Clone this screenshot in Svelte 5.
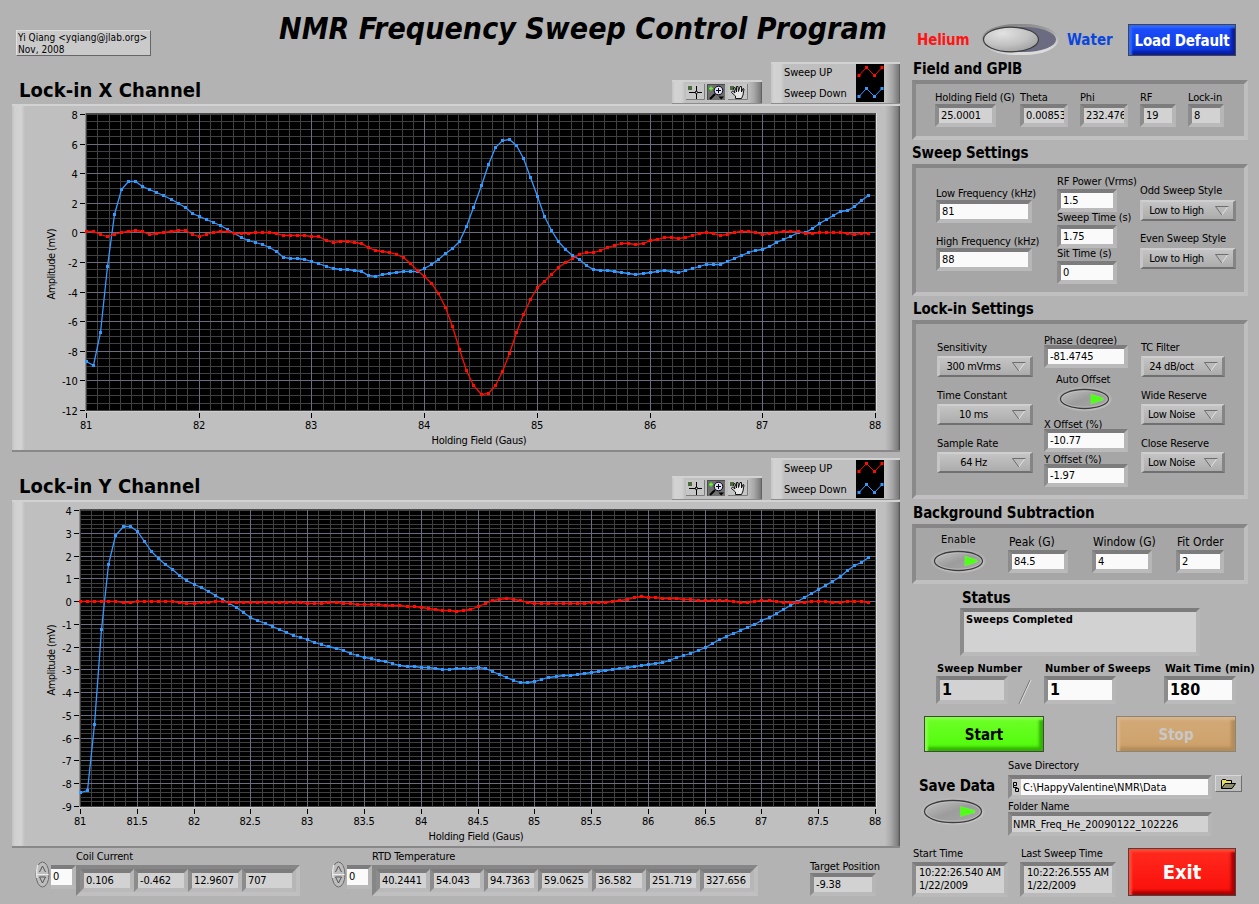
<script>
  // sample heights in plot pixels, measured down from the top of the scale
  const xUp = [
    117,117,120,122,120,118,117,116,117,120,119,118,117,116,116,120,122,120,118,117,117,119,119,119,
    118,118,118,119,121,121,121,121,122,122,126,128,127,127,128,129,133,136,137,138,140,143,149,156,
    162,169,179,193,212,235,256,271,280,279,271,257,239,218,200,185,173,167,160,153,148,144,140,138,
    138,136,133,131,129,129,130,129,126,125,123,123,124,123,121,119,118,119,121,120,118,117,117,118,
    120,119,118,117,117,117,119,119,118,118,118,118,119,120,119,119
  ];
  const xDown = [
    247,251,218,152,100,75,67,67,72,75,78,81,85,89,93,99,102,105,108,111,115,119,123,126,
    128,130,133,137,143,144,144,145,147,149,152,154,155,155,156,157,161,162,160,159,158,157,157,157,
    154,150,145,139,134,127,112,93,71,50,33,26,25,31,44,63,82,102,116,127,135,141,145,151,
    155,156,156,157,158,159,160,159,158,157,156,157,158,156,154,152,150,150,150,147,144,141,138,136,
    135,132,128,125,122,118,118,114,109,105,101,97,96,92,86,81
  ];
  const yUp = [
    91,91,91,91,91,91,92,92,91,91,91,91,91,91,92,93,93,92,92,91,91,92,92,92,
    92,92,92,92,92,92,92,92,93,93,93,92,92,93,93,94,94,94,94,95,95,95,96,96,
    97,98,99,100,100,101,100,99,96,93,90,89,88,89,90,92,93,93,93,93,93,93,93,93,
    92,92,92,91,90,89,87,86,87,87,88,88,88,89,89,90,90,90,90,90,91,92,92,91,
    90,90,91,92,92,92,92,91,91,91,92,92,91,91,91,92
  ];
  const yDown = [
    282,280,214,119,54,25,16,16,21,31,41,48,54,59,65,70,74,77,81,85,89,93,97,102,
    107,110,113,116,119,122,125,127,129,132,134,136,138,140,143,145,147,148,150,151,153,155,156,156,
    157,157,158,159,159,158,158,158,157,158,161,164,167,170,172,172,171,169,167,166,165,165,164,163,
    162,161,160,159,158,157,156,155,154,153,152,150,147,145,143,140,137,133,129,126,123,120,117,114,
    110,107,103,99,95,91,87,83,79,75,71,66,60,55,52,47
  ];

  const PLOT_H = 296;
  const RIGHT = 863.5;
  const TOP = 10.5;

  function makeChart(title, left, max, min, yStep, yMinor, xStep, up, down) {
    const width = RIGHT - left;
    const px = (v) => Math.floor(left + ((v - 81) / 7) * width) + 0.5;
    const py = (v) => Math.floor(TOP + ((max - v) / (max - min)) * PLOT_H) + 0.5;
    const xs = [];
    const ys = [];
    const xMinors = [];
    const yMinors = [];
    for (let v = 81; v <= 88; v += xStep) xs.push({ v, p: px(v) });
    for (let v = max; v >= min; v -= yStep) ys.push({ v, p: py(v) });
    for (let i = 0; i <= 70; i++) xMinors.push(px(81 + i / 10));
    for (let i = 0; i <= (max - min) / yMinor; i++) yMinors.push(py(max - i * yMinor));
    const trace = (data, color) => ({
      color,
      points: data.map((d, i) => [Math.round(left - 0.5 + (i / 112) * width), TOP - 0.5 + d])
    });
    return {
      title, left, width, xs, ys, xMinors, yMinors,
      traces: [trace(down, "#3399ff"), trace(up, "#ff0d00")]
    };
  }

  const charts = [
    makeChart("Lock-in X Channel", 74.5, 8, -12, 2, 0.5, 1, xUp, xDown),
    makeChart("Lock-in Y Channel", 68.5, 4, -9, 1, 0.2, 0.5, yUp, yDown)
  ];

  const arrays = [
    { label: "Coil Current", values: ["0.106", "-0.462", "12.9607", "707"] },
    {
      label: "RTD Temperature",
      values: ["40.2441", "54.043", "94.7363", "59.0625", "36.582", "251.719", "327.656"]
    }
  ];

  let saveData = true;
  let autoOffset = true;
  let bgEnable = true;
</script>

{#snippet field(label, value, width, kind)}
  <div class="field">
    <span class="label">{label}</span>
    <div class="box {kind}" style:width="{width}px">{value}</div>
  </div>
{/snippet}

{#snippet ring(label, value, width)}
  <div class="field ring-field">
    <span class="label">{label}</span>
    <div class="ring" style:width="{width}px">
      <span>{value}</span>
      <svg width="14" height="10" viewBox="0 0 14 10">
        <path d="M0.5 0.5H13L6.8 9Z" fill="#bababa" />
        <path d="M13 0.5L6.8 9" stroke="#e2e2e2" fill="none" />
        <path d="M13.5 0.5H0.5L6.8 9" stroke="#6e6e6e" fill="none" />
      </svg>
    </div>
  </div>
{/snippet}

{#snippet oval(w, h, on)}
  <svg class="oval" width={w + 8} height={h + 8} viewBox="0 0 {w + 8} {h + 8}">
    <defs>
      <linearGradient id="ovalFill" x1="0" y1="0" x2="1" y2="1">
        <stop offset="0" stop-color="#c4c4c4" />
        <stop offset=".5" stop-color="#9c9c9c" />
        <stop offset="1" stop-color="#a8a8a8" />
      </linearGradient>
    </defs>
    <ellipse cx={w / 2 + 4} cy={h / 2 + 4} rx={w / 2 + 3} ry={h / 2 + 2.5} fill="#c0c0c0" opacity=".35" />
    <ellipse cx={w / 2 + 5} cy={h / 2 + 5} rx={w / 2 + 0.5} ry={h / 2 + 0.5} fill="#d0d0d0" opacity=".5" />
    <ellipse cx={w / 2 + 4} cy={h / 2 + 4} rx={w / 2 - 0.5} ry={h / 2 - 0.5} fill="url(#ovalFill)" stroke="#3c3c3c" stroke-width="1.3" />
    <ellipse cx={w / 2 + 4} cy={h / 2 + 4} rx={w / 2 - 1.8} ry={h / 2 - 1.8} fill="none" stroke="#cfcfcf" stroke-width=".8" opacity=".7" />
    {#if on}
      <path d="M{w * 0.63 + 4} {h / 2 - 1}L{w * 0.88 + 4} {h / 2 + 3}V{h / 2 + 5}L{w * 0.63 + 4} {h / 2 + 9}Z" fill="#4dff14" stroke="#7cf050" stroke-width=".5" />
    {/if}
  </svg>
{/snippet}

<div class="panel">
  <div class="left">
    <header>
      <div class="author">Yi Qiang &lt;yqiang@jlab.org&gt;<br />Nov, 2008</div>
      <h1>NMR Frequency Sweep Control Program</h1>
    </header>

    {#each charts as chart}
      <section class="channel">
        <div class="channel-head">
          <h2>{chart.title}</h2>
          <div class="palette raised">
            <svg width="62" height="16" viewBox="0 0 62 16">
              <!-- cursor tool -->
              <rect width="19" height="16" fill="#c6c6c6" />
              <path d="M18.5 0V15.5H0" stroke="#7c7c7c" fill="none" />
              <rect x="2" y="2" width="4" height="4" fill="#4d6a3c" />
              <path d="M3 8.5H16M10.5 2V15" stroke="#000" fill="none" />
              <rect x="9.5" y="7.5" width="2" height="2" fill="#ccc" stroke="#000" stroke-width=".6" />
              <!-- zoom tool -->
              <rect x="21" width="18" height="16" fill="#6f6f6f" />
              <path d="M21.5 16V.5H39" stroke="#4c4c4c" fill="none" />
              <path d="M23 4.5H27M25 2.5V6.5" stroke="#55ff22" stroke-width="1.4" />
              <path d="M29 10L24 15" stroke="#000" stroke-width="2" />
              <circle cx="32.5" cy="6.5" r="4.3" fill="#e0e0ff" stroke="#000" />
              <path d="M30 6.5H35M32.5 4V9" stroke="#000" />
              <path d="M32.5 12.5H38L35.2 15.5Z" fill="#000" />
              <!-- pan tool -->
              <rect x="42" width="20" height="16" fill="#c6c6c6" />
              <path d="M61.5 0V15.5H42" stroke="#7c7c7c" fill="none" />
              <rect x="44" y="2" width="4" height="4" fill="#4d6a3c" />
              <path d="M49.5 14.5V12L45.5 8.5L46.5 7L49 9L47.5 4L49 3.5L50.5 8V2.5H52L52.5 7.5L54 2.5H55.5V8L57 4.5L58 5L57 11L55.5 14.5Z" fill="#e8e8e8" stroke="#000" stroke-width=".9" />
            </svg>
          </div>
          <div class="legend raised">
            <div class="names"><span>Sweep UP</span><span>Sweep Down</span></div>
            <svg width="28" height="38" viewBox="0 0 28 38">
              <rect width="28" height="38" fill="#000" />
              {#each [["#ff0d00", 0], ["#3399ff", 21]] as [color, dy]}
                <g transform="translate(0 {dy})" fill={color}>
                  <path d="M3 11.5L10.5 3.5L18.5 11.5L26 3.5" stroke={color} fill="none" />
                  <path d="M1.5 10h3v3h-3zM9 2h3v3H9zM17 10h3v3h-3zM24.5 2h3v3h-3z" />
                </g>
              {/each}
            </svg>
          </div>
        </div>

        <div class="graph">
          <svg width="888" height="348" viewBox="0 0 888 348">
            <rect x={chart.left - 1} y="9" width={chart.width + 2.5} height="298.5" fill="#dedede" />
            <rect x={chart.left - 1} y="9" width={chart.width + 1.5} height="297.5" fill="#4c4c4c" />
            <rect x={chart.left - 0.5} y="10" width={chart.width + 1} height="297" fill="#000" />
            <g stroke="#404040" shape-rendering="crispEdges">
              {#each chart.xMinors as p}<line x1={p} x2={p} y1="10" y2="307" />{/each}
              {#each chart.yMinors as p}<line x1={chart.left} x2={RIGHT} y1={p} y2={p} />{/each}
            </g>
            <g stroke="#6b6b80" shape-rendering="crispEdges">
              {#each chart.xs.slice(1, -1) as t}<line x1={t.p} x2={t.p} y1="10" y2="307" />{/each}
              {#each chart.ys.slice(1, -1) as t}<line x1={chart.left} x2={RIGHT} y1={t.p} y2={t.p} />{/each}
            </g>
            <g stroke="#000" shape-rendering="crispEdges">
              {#each chart.xs as t}<line x1={t.p} x2={t.p} y1="309" y2="314" />{/each}
              {#each chart.ys as t}<line x1={chart.left - 7} x2={chart.left - 2} y1={t.p} y2={t.p} />{/each}
            </g>
            {#each chart.ys as t}
              <text x={chart.left - 9} y={t.p + 4} text-anchor="end">{t.v}</text>
            {/each}
            {#each chart.xs as t}
              <text x={t.p - 0.5} y="325" text-anchor="middle">{t.v}</text>
            {/each}
            <text x={(chart.left + RIGHT) / 2 - 2} y="340" text-anchor="middle" textLength="95">Holding Field (Gaus)</text>
            <text transform="translate(43 160) rotate(-90)" text-anchor="middle" textLength="71">Amplitude (mV)</text>
            {#each chart.traces as tr}
              <polyline points={tr.points.map((p) => `${p[0] + 0.5},${p[1] + 0.5}`).join(" ")} fill="none" stroke={tr.color} stroke-width="1.3" />
              {#each tr.points as [x, y]}
                <rect x={x - 1} y={y - 1} width="3" height="3" fill={tr.color} />
              {/each}
            {/each}
          </svg>
        </div>
      </section>
    {/each}

    <footer>
      {#each arrays as arr}
        <div class="array">
          <svg width="16" height="27" viewBox="0 0 16 27">
            <ellipse cx="7.5" cy="13.5" rx="6.5" ry="12.5" fill="#bdbdbd" stroke="#6c6c6c" />
            <path d="M3 4Q1 9 2 17" stroke="#e6e6e6" fill="none" stroke-width="1.5" />
            <path d="M1.5 13.5H13.5" stroke="#eee" />
            <path d="M4.5 11L7.5 5L10.5 11M4.5 16H10.5L7.5 22Z" stroke="#555" fill="none" />
          </svg>
          <div class="box index">0</div>
          <div class="field">
            <span class="label">{arr.label}</span>
            <div class="cluster">
              {#each arr.values as v}<div class="box ro cell">{v}</div>{/each}
            </div>
          </div>
        </div>
      {/each}
      <div class="target">{@render field("Target Position", "-9.38", 66, "ro")}</div>
    </footer>
  </div>

  <div class="right">
    <div class="mode">
      <span class="helium">Helium</span>
      <svg width="78" height="34" viewBox="0 0 78 34">
        <defs>
          <radialGradient id="knob" cx=".35" cy=".25" r=".8">
            <stop offset="0" stop-color="#e2e2e2" />
            <stop offset=".6" stop-color="#c2c2c2" />
            <stop offset="1" stop-color="#a0a0a0" />
          </radialGradient>
          <linearGradient id="rim" x1="0" y1="0" x2=".3" y2="1">
            <stop offset="0" stop-color="#7c7c7c" />
            <stop offset=".5" stop-color="#a8a8a8" />
            <stop offset="1" stop-color="#dcdcdc" />
          </linearGradient>
        </defs>
        <rect x=".5" y="1" width="77" height="31" rx="34" ry="15.5" fill="url(#rim)" />
        <rect x="3" y="4" width="72" height="25" rx="31" ry="12.5" fill="#6b6b82" />
        <ellipse cx="30" cy="16.5" rx="27.5" ry="12.3" fill="url(#knob)" stroke="#3c3c3c" stroke-width="1.2" />
      </svg>
      <span class="water">Water</span>
      <button class="load">Load Default</button>
    </div>

    <h3>Field and GPIB</h3>
    <div class="group gpib">
      {@render field("Holding Field (G)", "25.0001", 61, "ro")}
      {@render field("Theta", "0.00853", 48, "ro")}
      {@render field("Phi", "232.476", 48, "ro")}
      {@render field("RF", "19", 36, "ro")}
      {@render field("Lock-in", "8", 36, "ro")}
    </div>

    <h3 class="sweep-title">Sweep Settings</h3>
    <div class="group sweep">
      <div class="col freq">
        {@render field("Low Frequency (kHz)", "81", 96, "")}
        {@render field("High Frequency (kHz)", "88", 96, "")}
      </div>
      <div class="col power">
        {@render field("RF Power (Vrms)", "1.5", 60, "")}
        {@render field("Sweep Time (s)", "1.75", 60, "")}
        {@render field("Sit Time (s)", "0", 60, "")}
      </div>
      <div class="col style">
        {@render ring("Odd Sweep Style", "Low to High", 96)}
        {@render ring("Even Sweep Style", "Low to High", 96)}
      </div>
    </div>

    <h3>Lock-in Settings</h3>
    <div class="group lockin">
      <div class="col">
        {@render ring("Sensitivity", "300 mVrms", 96)}
        {@render ring("Time Constant", "10 ms", 96)}
        {@render ring("Sample Rate", "64 Hz", 96)}
      </div>
      <div class="col offsets">
        {@render field("Phase (degree)", "-81.4745", 84, "")}
        <div class="auto">
          <span class="label">Auto Offset</span>
          {@render oval(49, 20, autoOffset)}
        </div>
        {@render field("X Offset (%)", "-10.77", 84, "")}
        {@render field("Y Offset (%)", "-1.97", 84, "")}
      </div>
      <div class="col">
        {@render ring("TC Filter", "24 dB/oct", 84)}
        {@render ring("Wide Reserve", "Low Noise", 84)}
        {@render ring("Close Reserve", "Low Noise", 84)}
      </div>
    </div>

    <h3>Background Subtraction</h3>
    <div class="group background">
      <div class="enable">
        <span class="label">Enable</span>
        {@render oval(49, 20, bgEnable)}
      </div>
      {@render field("Peak (G)", "84.5", 60, "")}
      {@render field("Window (G)", "4", 60, "")}
      {@render field("Fit Order", "2", 48, "")}
    </div>

    <div class="status">
      <h3>Status</h3>
      <div class="box ro">Sweeps Completed</div>
    </div>

    <div class="counts">
      {@render field("Sweep Number", "1", 72, "ro")}
      <svg width="14" height="26" viewBox="0 0 14 26">
        <path d="M12 1L1 25" stroke="#6c6c6c" />
        <path d="M13 1L2 25" stroke="#dedede" />
      </svg>
      {@render field("Number of Sweeps", "1", 72, "")}
      {@render field("Wait Time (min)", "180", 72, "")}
    </div>

    <div class="run">
      <button class="start">Start</button>
      <button class="stop" disabled>Stop</button>
    </div>

    <div class="save">
      <div class="save-toggle">
        <h3>Save Data</h3>
        {@render oval(58, 23, saveData)}
      </div>
      <div class="paths">
        <span class="label">Save Directory</span>
        <div class="dir">
          <div class="box path">
            <svg width="9" height="16" viewBox="0 0 9 16">
              <path d="M1.5 3.5h3v3h-3zM3.5 9.5h3v3h-3zM1.5 6.5V8.5H5V9.5" stroke="#000" fill="none" />
            </svg>
            <span>C:\HappyValentine\NMR\Data</span>
          </div>
          <button class="browse" aria-label="Browse">
            <svg width="17" height="12" viewBox="0 0 17 12">
              <path d="M1.5 10.5V2.5L2.5 1.5H5.5L6.5 2.5H11.5V5" fill="#e8e060" stroke="#000" />
              <path d="M1.5 10.5L5 5.5H15.5L12 10.5Z" fill="#8c8c70" stroke="#000" />
            </svg>
          </button>
        </div>
        <span class="label folder">Folder Name</span>
        <div class="box ro name">NMR_Freq_He_20090122_102226</div>
      </div>
    </div>

    <div class="times">
      <div class="field">
        <span class="label">Start Time</span>
        <div class="box ro time">10:22:26.540 AM<br />1/22/2009</div>
      </div>
      <div class="field">
        <span class="label">Last Sweep Time</span>
        <div class="box ro time">10:22:26.555 AM<br />1/22/2009</div>
      </div>
      <button class="exit">Exit</button>
    </div>
  </div>
</div>

<style>
  :global(body) {
    background: #b3b3b3;
  }

  .panel {
    display: flex;
    width: 1259px;
    height: 904px;
    overflow: hidden;
    background: #b3b3b3;
    color: #000;
    font-family: "DejaVu Sans Condensed", "DejaVu Sans", sans-serif;
    font-stretch: condensed;
    font-size: 11px;
    letter-spacing: -0.15px;
    line-height: 14px;
    white-space: nowrap;
  }

  .panel * {
    box-sizing: border-box;
  }

  svg {
    display: block;
    flex: none;
  }

  h1, h2, h3 {
    margin: 0;
    font-weight: bold;
  }

  button {
    padding: 0;
    font-family: inherit;
    font-stretch: inherit;
    font-weight: bold;
  }

  .left {
    width: 900px;
    flex: none;
  }

  .right {
    width: 359px;
    flex: none;
    padding-left: 12px;
  }

  /* header */
  header {
    display: flex;
    height: 56px;
    padding-left: 16px;
  }

  .author {
    width: 135px;
    height: 26px;
    margin-top: 30px;
    padding: 1px 1px;
    background: #cacaca;
    border: 1px solid #e0e0e0;
    border-right-color: #666;
    border-bottom-color: #666;
    font-size: 10px;
    line-height: 12px;
    letter-spacing: 0.04px;
  }

  h1 {
    margin: 11px 0 0 128px;
    font-size: 30px;
    line-height: 35px;
    font-style: italic;
    letter-spacing: 0.06px;
  }

  /* charts */
  .channel {
    height: 396px;
    padding-left: 12px;
  }

  .channel-head {
    display: flex;
    align-items: flex-end;
    height: 48px;
  }

  h2 {
    width: 660px;
    padding: 0 0 2px 7px;
    font-size: 20px;
    line-height: 24px;
    letter-spacing: 0.05px;
  }

  .raised {
    display: flex;
    border-top: 2px solid #d2d2d2;
    border-bottom: 1px solid #8c8c8c;
    background: linear-gradient(90deg, #c4c4c4 0, #d3d3d3 3px, #d0d0d0 10px, #bfbfbf 13px, #bfbfbf calc(100% - 14px), #a8a8a8 calc(100% - 8px), #787878 calc(100% - 1px), #4c4c4c 100%);
  }

  .palette {
    width: 90px;
    height: 24px;
    padding: 2px 0 0 14px;
  }

  .legend {
    width: 129px;
    height: 42px;
    margin-left: 9px;
    padding-left: 13px;
  }

  .names {
    display: flex;
    flex-direction: column;
    width: 72px;
    margin-top: -2px;
    line-height: 21px;
  }

  .graph {
    width: 888px;
    height: 348px;
    border-top: 2px solid #d2d2d2;
    border-bottom: 2px solid #888;
    background: linear-gradient(90deg, #c2c2c2 0, #d0d0d0 3px, #d3d3d3 9px, #bfbfbf 13px, #bfbfbf 873px, #a8a8a8 879px, #7c7c7c 886px, #4c4c4c 888px);
  }

  .graph svg {
    margin-top: -2px;
  }

  text {
    font-size: 11px;
    letter-spacing: -0.2px;
  }

  /* indicators and controls */
  .field {
    display: flex;
    flex-direction: column;
    align-items: flex-start;
  }

  .label {
    display: block;
    padding-top: 1px;
    margin-bottom: -1px;
    line-height: 14px;
  }

  .box {
    height: 23px;
    padding: 0 2px;
    overflow: hidden;
    border: 4px solid;
    border-color: #7c7c7c #b6b6b6 #bababa #8c8c8c;
    background: #fafafa;
    line-height: 16px;
  }

  .box.ro {
    background: #d2d2d2;
  }

  .ring {
    display: flex;
    align-items: center;
    justify-content: space-between;
    height: 21px;
    margin-top: 3px;
    padding: 0 4px 0 0;
    border: solid;
    border-width: 2px 3px;
    border-color: #cfcfcf #858585 #707070 #c6c6c6;
    background: linear-gradient(#c4c4c4, #acacac);
    letter-spacing: -0.35px;
  }

  .ring span {
    flex: 1;
    padding-right: 5px;
    text-align: center;
  }

  .group {
    display: flex;
    width: 336px;
    border: 4px solid;
    border-color: #868686 #bebebe #c0c0c0 #8a8a8a;
    background: #a6a6a6;
  }

  .col {
    display: flex;
    flex-direction: column;
  }

  h3 {
    font-size: 15px;
    line-height: 18px;
    letter-spacing: -0.15px;
    padding-left: 1px;
  }

  /* mode row */
  .mode {
    display: flex;
    align-items: center;
    height: 40px;
    margin-top: 20px;
    padding-left: 5px;
    font-size: 15px;
    font-weight: bold;
  }

  .helium {
    width: 64px;
    color: #ff1414;
  }

  .water {
    width: 61px;
    margin-left: 8px;
    color: #0a46dc;
    letter-spacing: 0;
  }

  .load,
  .start,
  .stop,
  .exit {
    border: 1px solid #444;
    color: #fff;
    font-size: 15px;
  }

  .load {
    width: 108px;
    height: 32px;
    padding-top: 1px;
    background: linear-gradient(#1e50ff, #0a35dc);
    box-shadow: inset 3px 3px 2px #2c68ff, inset -4px -4px 3px #0a1ea0;
    letter-spacing: -0.2px;
  }

  /* Field and GPIB */
  .gpib {
    display: grid;
    grid-template-columns: 85px 60px 60px 48px 40px;
    height: 60px;
    margin-top: 2px;
    padding: 6px 0 0 19px;
  }

  /* Sweep Settings */
  .sweep-title {
    margin-top: 4px;
    padding-left: 0;
  }

  .sweep {
    height: 132px;
    margin-top: 2px;
  }

  .freq {
    width: 141px;
    padding: 18px 0 0 20px;
    gap: 11px;
  }

  .power {
    width: 83px;
    padding: 8px 0 0;
  }

  .power .label {
    padding-top: 0;
    margin-bottom: 2px;
    line-height: 11px;
  }

  .style {
    padding-top: 15px;
    gap: 10px;
  }

  /* Lock-in Settings */
  .sweep + h3 {
    margin-top: 4px;
  }

  .lockin {
    height: 179px;
    margin: 2px 0 5px;
    padding-left: 21px;
  }

  .lockin .col {
    padding-top: 16px;
    gap: 11px;
  }

  .lockin .ring {
    margin-top: 2px;
  }

  .lockin .offsets {
    gap: 0;
    padding-top: 9px;
    margin: 0 13px 0 11px;
  }

  .lockin .offsets .label {
    padding-top: 2px;
    margin-bottom: -2px;
    line-height: 12px;
  }

  .auto {
    height: 49px;
    padding: 5px 0 0 12px;
  }

  .lockin .auto .label {
    padding: 0;
    line-height: 14px;
    margin-bottom: -2px;
  }

  /* Background Subtraction */
  .background {
    height: 60px;
    margin-top: 2px;
    padding-top: 7px;
  }

  .background .field {
    flex: none;
    width: 84px;
  }

  .background .field .label {
    padding-left: 1px;
    padding-top: 0;
    margin-bottom: 0;
    font-size: 12px;
    line-height: 15px;
    letter-spacing: 0;
  }

  .enable {
    width: 92px;
    flex: none;
  }

  .enable .label {
    margin: -2px 0 0 25px;
    padding: 0;
    letter-spacing: 0.2px;
  }

  .enable :global(svg) {
    margin: 0 0 0 14px;
  }

  /* Status */
  .status {
    padding: 5px 0 0 48px;
  }

  .status h3 {
    padding-left: 2px;
  }

  .status .box {
    width: 240px;
    height: 48px;
    margin-top: 1px;
    font-weight: bold;
    letter-spacing: 0.05px;
  }

  .counts {
    display: flex;
    height: 43px;
    margin-top: 6px;
    padding-left: 24px;
    font-weight: bold;
    letter-spacing: 0.05px;
  }

  .counts .field {
    width: 72px;
  }

  .counts .label {
    padding: 0 0 0 1px;
    margin: 0;
  }

  .counts svg {
    margin: 17px 12px 0 10px;
  }

  .counts .field:last-child {
    margin-left: 48px;
  }

  .counts .box {
    height: 28px;
    font-size: 16px;
    line-height: 20px;
  }

  /* Start / Stop */
  .run {
    display: flex;
    gap: 72px;
    margin-top: 11px;
    padding-left: 12px;
  }

  .start,
  .stop {
    width: 120px;
    height: 36px;
    padding-top: 1px;
  }

  .start {
    color: #000;
    background: linear-gradient(#6eff28, #50fa0a);
    box-shadow: inset 3px 3px 2px #80ff40, inset -4px -4px 3px #32b400;
  }

  .stop {
    border-color: #8c8474;
    color: #c8c8c8;
    background: linear-gradient(#d2aa78, #cda069);
    box-shadow: inset 3px 3px 2px #d8b488, inset -4px -4px 3px #b48c5a;
  }

  /* Save */
  .save {
    display: flex;
    height: 78px;
    margin-top: 6px;
  }

  .save-toggle {
    width: 96px;
    padding: 19px 0 0 6px;
  }

  .save-toggle :global(svg) {
    margin: 1px 0 0 2px;
  }

  .dir {
    display: flex;
    gap: 3px;
    margin-top: 3px;
  }

  .path {
    display: flex;
    width: 204px;
    height: 24px;
    padding: 0;
    letter-spacing: -0.05px;
    line-height: 17px;
  }

  .path svg {
    background: #c8c8c8;
  }

  .path span {
    padding-left: 2px;
  }

  .browse {
    display: flex;
    align-items: center;
    justify-content: center;
    width: 27px;
    height: 17px;
    border: 1px solid #d8d8d8;
    border-right-color: #6e6e6e;
    border-bottom-color: #6e6e6e;
    background: #bdbdbd;
  }

  .folder {
    line-height: 13px;
  }

  .name {
    width: 204px;
    height: 24px;
    padding-left: 1px;
    letter-spacing: 0;
    line-height: 17px;
  }

  /* Times */
  .times {
    display: flex;
    align-items: flex-start;
    margin-top: 12px;
  }

  .times .label {
    padding: 0 0 0 1px;
    margin-bottom: 3px;
    line-height: 11px;
  }

  .time {
    width: 96px;
    height: 35px;
    margin-right: 12px;
    padding: 0 3px;
    line-height: 13px;
    letter-spacing: -0.2px;
  }

  .exit {
    width: 108px;
    height: 48px;
    font-size: 20px;
    background: linear-gradient(#ff2a1e, #fa0f0a);
    box-shadow: inset 3px 3px 2px #ff4632, inset -4px -4px 3px #aa0000;
  }

  /* arrays below the charts */
  footer {
    display: flex;
    padding-left: 35px;
  }

  .array {
    display: flex;
    margin-right: 31px;
  }

  .array > svg {
    margin-top: 13px;
  }

  .index {
    width: 25px;
    margin-top: 17px;
    border-left-width: 0;
    height: 24px;
  }

  .array .label {
    padding: 1px 0 0;
    margin: 1px 0;
  }

  .cluster {
    display: flex;
    border: 4px solid;
    border-color: #868686 #bebebe #c0c0c0 #868686;
  }

  .cell {
    width: 54px;
  }

  .target {
    margin: 11px 0 0 21px;
  }
</style>
